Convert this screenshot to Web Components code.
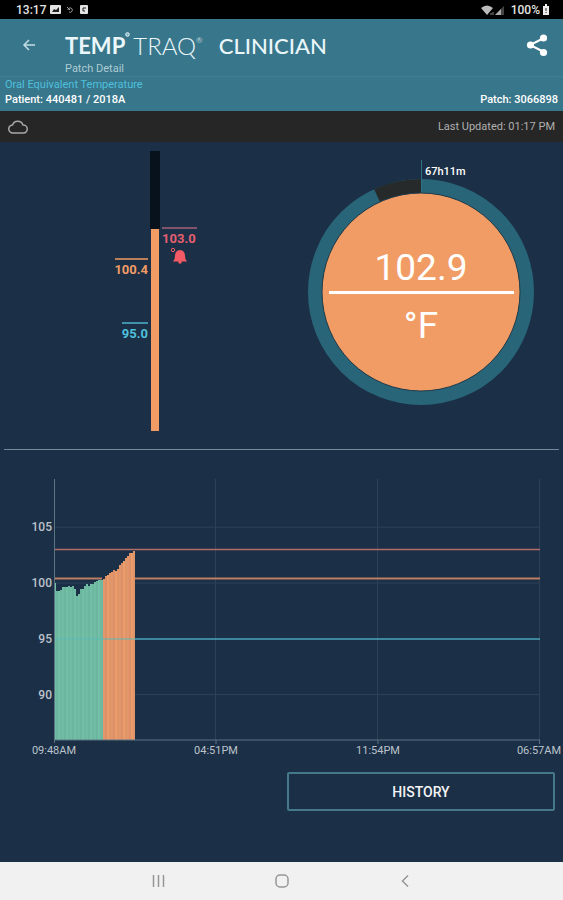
<!DOCTYPE html>
<html lang="en">
<head>
<meta charset="utf-8">
<meta name="viewport" content="width=device-width, initial-scale=1">
<title>TempTraq Clinician</title>
<style>
  body { margin: 0; background: #1b2f46; font-family: Roboto, "Liberation Sans", sans-serif; }
</style>
</head>
<body>
<tt-screen>
  <tt-status slot="top" time="13:17" battery="100%"></tt-status>
  <tt-header slot="top" subtitle="Patch Detail"></tt-header>
  <tt-patient slot="top">
    <span slot="mode">Oral Equivalent Temperature</span>
    <span slot="patient">Patient: 440481 / 2018A</span>
    <span slot="patch">Patch: 3066898</span>
  </tt-patient>
  <tt-sync slot="top">Last Updated: 01:17 PM</tt-sync>
  <tt-readings>
    <tt-thermometer></tt-thermometer>
    <tt-dial value="102.9" unit="°F" elapsed="67h11m"></tt-dial>
  </tt-readings>
  <tt-chart></tt-chart>
  <tt-action>HISTORY</tt-action>
  <tt-nav slot="bottom"></tt-nav>
</tt-screen>

<script>
const define = (name, render) => customElements.define(name, class extends HTMLElement {
  connectedCallback() {
    if (this.shadowRoot) return;
    this.attachShadow({ mode: "open" }).innerHTML = render(this);
  }
});

define("tt-screen", () => `
  <style>
    :host { display: flex; flex-direction: column; min-height: 100vh; }
    main { flex: 1; }
  </style>
  <slot name="top"></slot><main><slot></slot></main><slot name="bottom"></slot>`);

define("tt-status", el => `
  <style>
    :host { display: flex; align-items: center; height: 19px; padding: 0 13px 0 16px; background: #000; color: #e4e4e4; font-size: 12px; font-weight: 500; gap: 4px; }
    .right { margin-left: auto; display: flex; align-items: center; gap: 3px; }
    .right span { margin-left: 2px; margin-right: -1px; }
    svg { display: block; }
  </style>
  <span>${el.getAttribute("time")}</span>
  <svg width="38" height="12" viewBox="0 0 38 12" aria-hidden="true">
    <rect x="0" y="1" width="11" height="9" rx="1" fill="#e4e4e4"/><path d="M2 8l2-3 2 1 3-3v5z" fill="#222"/>
    <path d="M17 3l3 3M18 6c0-2 3-3 4-1s-1 4-3 3" fill="none" stroke="#aaa"/>
    <rect x="30" y="1" width="8" height="9" rx="1" fill="#e4e4e4"/><path d="M36 4h-3v3h2" fill="none" stroke="#222"/>
  </svg>
  <div class="right">
    <svg width="25" height="12" viewBox="0 0 25 12" aria-hidden="true">
      <path d="M0 4q6-5 12 0l-6 7z" fill="#bbb"/><path d="M10 9v2M12 8v3" stroke="#888"/>
      <path d="M14 11l9-9v9z" fill="#444"/><path d="M14 11l6-6v6z" fill="#aaa"/>
    </svg>
    <span>${el.getAttribute("battery")}</span>
    <svg width="8" height="11" viewBox="0 0 8 11" aria-hidden="true"><path d="M1 2h2V0h2v2h2v9H1z" fill="#eee"/><path d="M4 4v3M4 8v1" stroke="#222"/></svg>
  </div>`);

define("tt-header", el => `
  <style>
    :host { display: flex; align-items: flex-start; padding: 12px 15px 0 20px; background: #38768b; color: #fff; }
    button { display: block; border: 0; padding: 0; background: none; color: inherit; }
    svg { display: block; }
    .back { padding-top: 5px; }
    .title { flex: 1; margin-left: 27px; }
    .brand { display: flex; font: 22px/30px Lato, sans-serif; color: #eaf6f9; }
    b { font-weight: 700; }
    .thin { font-weight: 300; font-size: 24px; margin-left: 2px; }
    .product { font-weight: 500; margin-left: 16px; }
    sup { font-size: 8px; line-height: 18px; opacity: .7; }
    p { margin: 0; font-size: 11px; line-height: 15px; color: #aecbd3; }
    .share { padding-top: 2px; }
  </style>
  <button class="back" aria-label="Back"><svg width="18" height="18" viewBox="0 0 18 18"><path d="M15 9H4M9 4L4 9l5 5" fill="none" stroke="#c3dde4" stroke-width="1.5"/></svg></button>
  <div class="title">
    <div class="brand"><b>TEMP</b><svg width="6" height="8" viewBox="0 0 6 8" aria-hidden="true"><circle cx="2.5" cy="3.5" r="1.8" fill="#7fb0bf" stroke="#eaf6f9"/></svg><span class="thin">TRAQ</span><sup>®</sup><span class="product">CLINICIAN</span></div>
    <p>${el.getAttribute("subtitle")}</p>
  </div>
  <button class="share" aria-label="Share"><svg width="22" height="24" viewBox="0 0 22 24"><path d="M18 5L4 12l14 7" fill="none" stroke="#fff" stroke-width="2"/><g fill="#fff"><circle cx="17.500" cy="5" r="3.600"/><circle cx="4.500" cy="12" r="3.600"/><circle cx="17.500" cy="19.500" r="3.600"/></g></svg></button>`);

define("tt-patient", () => `
  <style>
    :host { display: block; padding: 0 5px 3px; background: #38768b; border-top: 1px solid #437f93; font-size: 11px; line-height: 15px; }
    .mode { color: #4fc0dc; }
    .row { display: flex; justify-content: space-between; color: #fff; font-weight: 500; line-height: 16px; }
  </style>
  <div class="mode"><slot name="mode"></slot></div>
  <div class="row"><slot name="patient"></slot><slot name="patch"></slot></div>`);

define("tt-sync", () => `
  <style>
    :host { display: flex; align-items: center; justify-content: space-between; height: 31px; padding: 0 8px; background: #262626; color: #b0b0b0; font-size: 11px; }
  </style>
  <svg width="20" height="14" viewBox="0 0 20 14" role="img" aria-label="Cloud"><path d="M5 13a4 4 0 0 1-.500-8 5.500 5.500 0 0 1 10.500 0A4 4 0 0 1 15.500 13z" fill="none" stroke="#a8a8a8" stroke-width="1.500"/></svg>
  <span><slot></slot></span>`);

define("tt-readings", () => `
  <style>
    :host { display: grid; grid-template-columns: 1fr 1fr; align-items: start; margin: 0 4px; padding: 8px 0 18px; border-bottom: 1px solid #73899a; }
  </style>
  <slot></slot>`);

define("tt-thermometer", () => `
  <style>
    :host { display: flex; justify-content: center; padding-left: 24px; }
    svg { display: block; font-size: 13px; font-weight: 700; }
  </style>
  <svg width="90" height="281" viewBox="0 0 90 281" role="img" aria-label="Temperature scale">
    <rect x="40" y="1" width="10" height="78" fill="#07121d"/>
    <rect x="41" y="79" width="8" height="202" fill="#f19c65"/>
    <g stroke-width="1.500">
      <path d="M52 78h35" stroke="#a5627a"/>
      <path d="M5 109h33" stroke="#f19c65"/>
      <path d="M12 173h26" stroke="#4fb3cf"/>
    </g>
    <text x="52" y="93" fill="#e35f70">103.0</text>
    <text x="38" y="124" fill="#f19c65" text-anchor="end">100.4</text>
    <text x="38" y="188" fill="#4fc0dc" text-anchor="end">95.0</text>
    <g fill="#f25a66"><path d="M63 111.500q2-1.500 2-5.500 0-5.500 5-6 5 .500 5 6 0 4 2 5.500z"/><circle cx="70" cy="112" r="1.800"/></g>
    <circle cx="63" cy="100" r="1.700" fill="none" stroke="#f25a66"/>
  </svg>`);

define("tt-dial", el => {
  const c = 118, top = 142, r = 106, a = 24.500 * Math.PI / 180;
  const gx = c - r * Math.sin(a), gy = top - r * Math.cos(a);
  return `
  <style>
    :host { display: flex; justify-content: center; padding-left: 2px; }
    svg { display: block; }
    .big { font-size: 37px; fill: #fff; text-anchor: middle; }
    .small { font-size: 11px; font-weight: 500; fill: #fff; }
  </style>
  <svg width="236" height="257" viewBox="0 0 236 257" role="img" aria-label="Current temperature">
    <circle cx="${c}" cy="${top}" r="${r}" fill="none" stroke="#296578" stroke-width="14"/>
    <path d="M${gx} ${gy}A${r} ${r} 0 0 1 ${c} ${top - r}" fill="none" stroke="#272a2b" stroke-width="14"/>
    <circle cx="${c}" cy="${top}" r="99" fill="#f19c65" stroke="#1c3b4c"/>
    <path d="M118.500 10v32" stroke="#2f6f84"/>
    <text class="small" x="122" y="25">${el.getAttribute("elapsed")}</text>
    <text class="big" x="118" y="130">${el.getAttribute("value")}</text>
    <rect x="26" y="141" width="185" height="3" fill="#fff"/>
    <text class="big" x="118" y="188">${el.getAttribute("unit")}</text>
  </svg>`;
});

define("tt-chart", () => {
  /* Axis geometry in view-box units. */
  const left = 54, right = 540, base = 270;
  const y = t => 113 + (100 - t) * 11.150;
  const temps = [100, 99.3, 99.3, 99.4, 99.6, 99.6, 99.6, 99.7, 99.6, 99.7, 99.5, 98.8, 99, 99.5, 99.5, 99.7, 99.9, 99.7, 99.9, 99.9, 100.1, 100.2, 100.3, 100.3,
    100.4, 100.6, 100.7, 100.9, 101, 101.2, 101.1, 101.3, 101.6, 101.8, 102, 102.2, 102.4, 102.7, 102.7, 102.9];
  const green = ["#70bda3", "#6ab69e", "#74c0a6", "#6cb8a0"], orange = ["#e3966a", "#db9069", "#ec9c68", "#df946a"];
  const bars = temps.map((t, i) => `<rect x="${left + i * 2 + (i > 23 ? 1 : 0)}" y="${y(t)}" width="${i === 23 ? 3 : 2}" height="${base - y(t)}" fill="${(i < 24 ? green : orange)[i % 4]}"/>`).join("");
  const grid = [105, 100, 90].map(t => `<path d="M${left} ${y(t)}H${right}"/>`).join("") +
    [216, 378, 540].map(x => `<path d="M${x - .5} 9V${base}"/>`).join("");
  const yl = [105, 100, 95, 90].map(t => `<text x="52" y="${y(t) + 4}" text-anchor="end">${t}</text>`).join("");
  const xl = [[54, "09:48AM"], [216, "04:51PM"], [378, "11:54PM"], [539, "06:57AM"]].map(([x, s]) => `<text x="${x}" y="284" text-anchor="middle">${s}</text>`).join("");
  return `
  <style>
    :host { display: block; padding-top: 20px; }
    svg { display: block; width: 100%; }
    text { fill: #bcc3cb; font-size: 11px; }
    .y text { font-weight: 500; font-size: 12px; }
  </style>
  <svg viewBox="0 0 563 290" role="img" aria-label="Temperature history">
    <g stroke="#2c4157">${grid}</g>
    <g shape-rendering="crispEdges">${bars}</g>
    <g fill="none">
      <path d="M54 79.500H540" stroke="#b26d6b" stroke-width="1.500"/>
      <path d="M54 108.500H102M135 108.500H540" stroke="#bd7f62" stroke-width="2"/>
      <path d="M54 169H135" stroke="#5cb9b8"/><path d="M135 169H540" stroke="#4aa5b8" stroke-width="1.500"/>
      <path d="M54.500 9V273M54 270H540M216 270v4M378 270v4M539.500 270v4" stroke="#5b7584"/>
    </g>
    <g class="y">${yl}</g><g>${xl}</g>
  </svg>`;
});

define("tt-action", () => `
  <style>
    :host { display: flex; justify-content: flex-end; padding: 12px 8px 51px; }
    button { width: 49%; height: 39px; border: 2px solid #44788b; border-radius: 2px; background: none; color: #f4f4f4; font: 500 14px Roboto, sans-serif; }
  </style>
  <button><slot></slot></button>`);

define("tt-nav", () => `
  <style>
    :host { display: flex; justify-content: center; align-items: center; gap: 103px; height: 38px; background: #f1f1f1; }
    button { display: block; border: 0; padding: 0; background: none; }
    svg { display: block; fill: none; stroke: #969696; stroke-width: 1.500; }
  </style>
  <button aria-label="Recent apps"><svg width="20" height="20" viewBox="0 0 20 20"><path d="M4.500 4v12M9.500 4v12M14.500 4v12"/></svg></button>
  <button aria-label="Home"><svg width="20" height="20" viewBox="0 0 20 20"><rect x="4" y="4" width="12" height="12" rx="4"/></svg></button>
  <button aria-label="Back"><svg width="20" height="20" viewBox="0 0 20 20"><path d="M13 4.500L7.500 10l5.500 5.500"/></svg></button>`);
</script>
</body>
</html>
